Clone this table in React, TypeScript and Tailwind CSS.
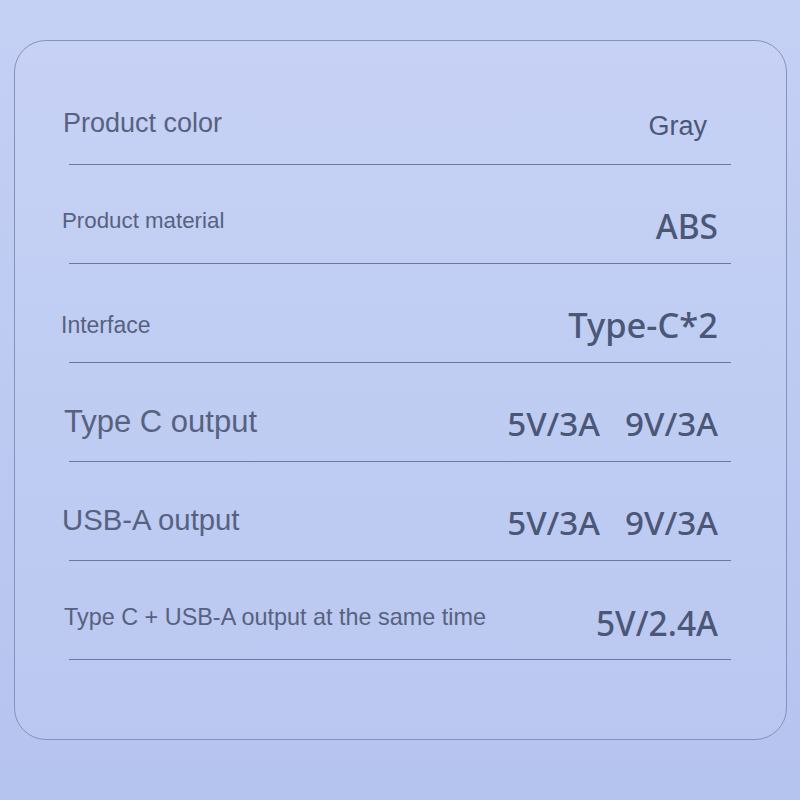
import React from "react";

type Row = {
	label: string;
	values: string[];
	labelClass: string;
	valueClass: string;
};

const rows: Row[] = [
	{
		label: "Product color",
		values: ["Gray"],
		labelClass: "text-[27px] mt-[18px] ml-[1px]",
		valueClass: "font-['Liberation_Sans',Arial,sans-serif] font-normal text-[27px] mt-[24px] mr-[11px]",
	},
	{
		label: "Product material",
		values: ["ABS"],
		labelClass: "text-[22.3px] mt-[14px]",
		valueClass: "font-['Noto_Sans',sans-serif] font-medium text-[33.5px] mt-[26px]",
	},
	{
		label: "Interface",
		values: ["Type-C*2"],
		labelClass: "text-[23px] mt-[26px] -ml-[1px]",
		valueClass: "font-['Noto_Sans',sans-serif] font-medium text-[34.5px] mt-[24px]",
	},
	{
		label: "Type C output",
		values: ["5V/3A", "9V/3A"],
		labelClass: "text-[31px] mt-[20px] ml-[2px]",
		valueClass: "font-['Noto_Sans',sans-serif] font-medium text-[33.2px] mt-[24px]",
	},
	{
		label: "USB-A output",
		values: ["5V/3A", "9V/3A"],
		labelClass: "text-[29.3px] mt-[17px]",
		valueClass: "font-['Noto_Sans',sans-serif] font-medium text-[33.2px] mt-[24px]",
	},
	{
		label: "Type C + USB-A output at the same time",
		values: ["5V/2.4A"],
		labelClass: "text-[23.4px] mt-[16px] ml-[2px]",
		valueClass: "font-['Noto_Sans',sans-serif] font-medium text-[33.5px] mt-[28px]",
	},
];

const App = () => {
	return (
		<div className="w-[800px] h-[800px] bg-gradient-to-b from-[#c4d0f4] to-[#b5c3ef] pt-[40px] pl-[14px]">
			<div className="w-[773px] h-[700px] rounded-[32px] border-[1.5px] border-[#8891ba] bg-white/5 pt-[25px] pl-[47px] pr-[55px]">
				{rows.map((row) => (
					<div key={row.label}>
						<div className="h-[97.5px] flex items-center justify-between pr-[13px]">
							<span
								className={`font-['Liberation_Sans',Arial,sans-serif] text-[#56627f] leading-none ${row.labelClass}`}
							>
								{row.label}
							</span>
							<div
								className={`flex gap-[25px] text-[#4b5777] leading-none ${row.valueClass}`}
							>
								{row.values.map((v, i) => (
									<span key={i}>{v}</span>
								))}
							</div>
						</div>
						<div className="h-[1.5px] bg-[#6d78a0] ml-[7px]" />
					</div>
				))}
			</div>
		</div>
	);
};

export default App;
